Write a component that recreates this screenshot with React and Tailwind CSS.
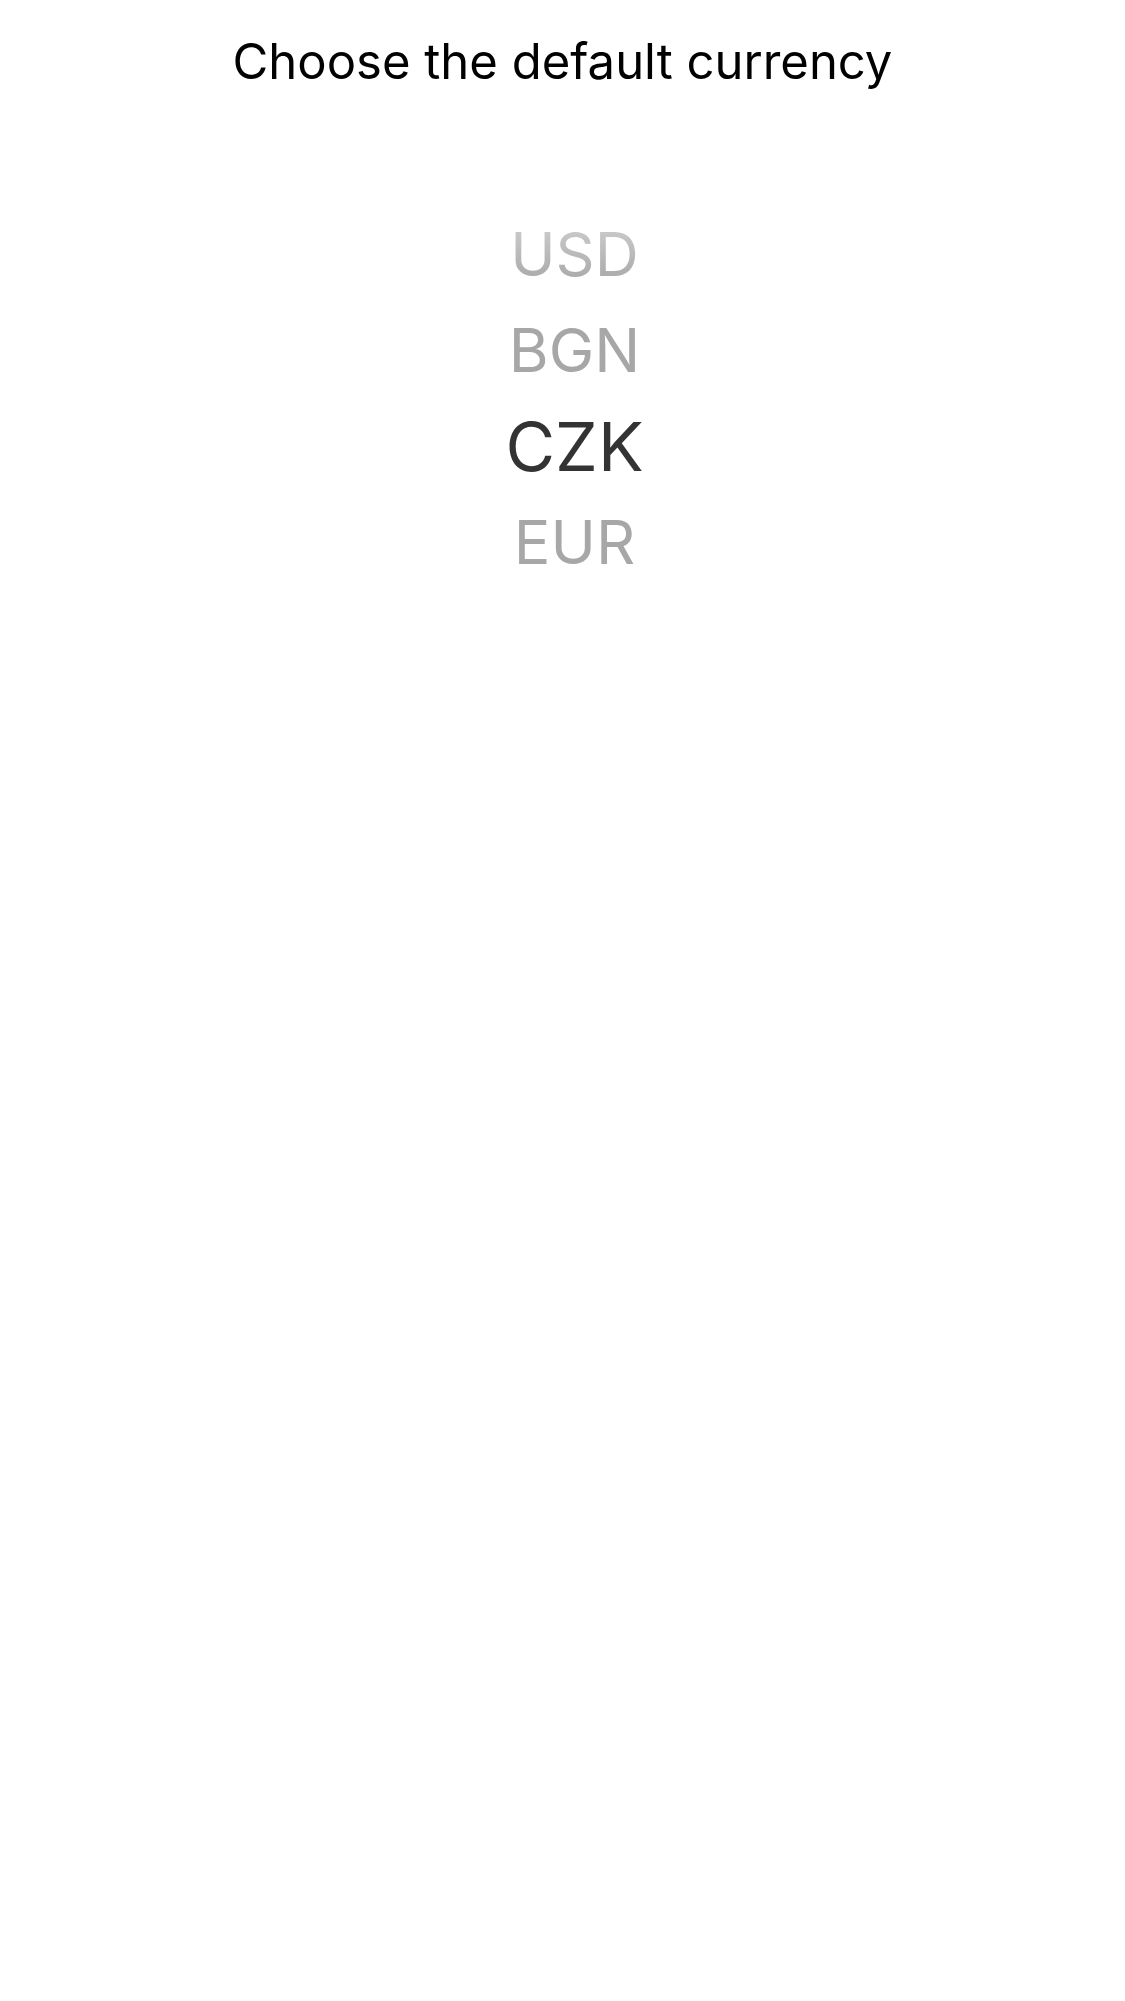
import { useState } from "react";

const currencies = ["USD", "BGN", "CZK", "EUR"];

export default function App() {
  const [selected, setSelected] = useState("CZK");
  return (
    <main className="min-h-screen bg-white px-12 pt-8 font-['Inter',sans-serif]">
      <h1 id="title" className="text-center text-[49px] leading-[60px] text-black">
        Choose the default currency
      </h1>
      <div role="listbox" aria-labelledby="title" className="relative mt-[114px] flex flex-col items-center pl-6">
        {currencies.map((code) => (
          <button
            key={code}
            type="button"
            role="option"
            aria-selected={code === selected}
            onClick={() => setSelected(code)}
            className={
              "h-24 " +
              (code === selected ? "text-[68px] leading-[96px] text-[#333333]" : "text-[61px] leading-[96px] text-[#a7a7a7]")
            }
          >
            {code}
          </button>
        ))}
        <div className="pointer-events-none absolute inset-x-0 top-0 h-20 bg-linear-to-b from-white/55 to-white/0" />
      </div>
    </main>
  );
}
